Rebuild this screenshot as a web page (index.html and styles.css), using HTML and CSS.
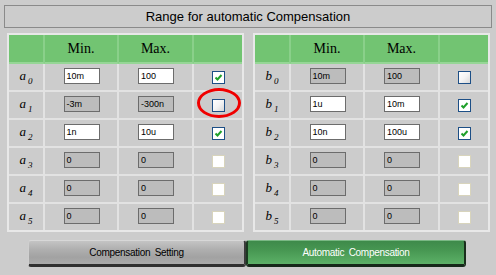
FILE: index.html
```html
<!DOCTYPE html>
<html>
<head>
<meta charset="utf-8">
<link rel="stylesheet" href="styles.css">
</head>
<body>
<div class="page">
  <div class="title">Range for automatic Compensation</div>
  <div class="tables">
    <div class="panel">
      <table class="grid">
        <tr class="head"><th class="c-lab"></th><th class="c-min">Min.</th><th class="c-max">Max.</th><th class="c-chk"></th></tr>
        <tr><td class="lab">a<sub>0</sub></td><td><span class="inp">10m</span></td><td><span class="inp">100</span></td><td><span class="cb on"><svg viewBox="0 0 11 11"><path d="M2.5 5.5 L4.5 7.5 L8.5 3" /></svg></span></td></tr>
        <tr><td class="lab">a<sub>1</sub></td><td><span class="inp dis">-3m</span></td><td><span class="inp dis">-300n</span></td><td><span class="cb off"></span></td></tr>
        <tr><td class="lab">a<sub>2</sub></td><td><span class="inp">1n</span></td><td><span class="inp">10u</span></td><td><span class="cb on"><svg viewBox="0 0 11 11"><path d="M2.5 5.5 L4.5 7.5 L8.5 3" /></svg></span></td></tr>
        <tr><td class="lab">a<sub>3</sub></td><td><span class="inp dis">0</span></td><td><span class="inp dis">0</span></td><td><span class="cb na"></span></td></tr>
        <tr><td class="lab">a<sub>4</sub></td><td><span class="inp dis">0</span></td><td><span class="inp dis">0</span></td><td><span class="cb na"></span></td></tr>
        <tr class="last"><td class="lab">a<sub>5</sub></td><td><span class="inp dis">0</span></td><td><span class="inp dis">0</span></td><td><span class="cb na"></span></td></tr>
      </table>
      <div class="ring"></div>
    </div>
    <div class="panel">
      <table class="grid">
        <tr class="head"><th class="c-lab"></th><th class="c-min">Min.</th><th class="c-max">Max.</th><th class="c-chk"></th></tr>
        <tr><td class="lab">b<sub>0</sub></td><td><span class="inp dis">10m</span></td><td><span class="inp dis">100</span></td><td><span class="cb off"></span></td></tr>
        <tr><td class="lab">b<sub>1</sub></td><td><span class="inp">1u</span></td><td><span class="inp">10m</span></td><td><span class="cb on"><svg viewBox="0 0 11 11"><path d="M2.5 5.5 L4.5 7.5 L8.5 3" /></svg></span></td></tr>
        <tr><td class="lab">b<sub>2</sub></td><td><span class="inp">10n</span></td><td><span class="inp">100u</span></td><td><span class="cb on"><svg viewBox="0 0 11 11"><path d="M2.5 5.5 L4.5 7.5 L8.5 3" /></svg></span></td></tr>
        <tr><td class="lab">b<sub>3</sub></td><td><span class="inp dis">0</span></td><td><span class="inp dis">0</span></td><td><span class="cb na"></span></td></tr>
        <tr><td class="lab">b<sub>4</sub></td><td><span class="inp dis">0</span></td><td><span class="inp dis">0</span></td><td><span class="cb na"></span></td></tr>
        <tr class="last"><td class="lab">b<sub>5</sub></td><td><span class="inp dis">0</span></td><td><span class="inp dis">0</span></td><td><span class="cb na"></span></td></tr>
      </table>
    </div>
  </div>
  <div class="buttons">
    <div class="btn gray">Compensation Setting</div>
    <div class="btn green">Automatic Compensation</div>
  </div>
</div>
</body>
</html>
```
FILE: styles.css
```css
* { box-sizing: border-box; }
html, body { margin: 0; padding: 0; }
body {
  width: 496px;
  height: 275px;
  background: #cccccc;
  font-family: "Liberation Sans", Arial, sans-serif;
  overflow: hidden;
}
.page { padding-top: 5px; }
.title {
  margin: 0 4px 0 4px;
  height: 23px;
  border: 1px solid #8a8a8a;
  display: flex;
  align-items: center;
  justify-content: center;
  font-size: 13px;
  color: #000;
  padding-bottom: 1px;
}
.tables {
  display: flex;
  gap: 9px;
  padding-left: 7px;
  margin-top: 5px;
}
.panel { position: relative; }
.grid {
  border-collapse: separate;
  border-spacing: 0;
  border: 2px solid #e8e8e8;
  width: 237px;
  table-layout: fixed;
}
.grid th, .grid td {
  padding: 0;
  border-right: 2px solid #e2e2e2;
  border-bottom: 2px solid #e2e2e2;
  text-align: center;
  vertical-align: middle;
}
.grid th:last-child, .grid td:last-child { border-right: none; }
.grid tr.last td { border-bottom: none; height: 26px; }
.grid td { height: 28px; }
.head th {
  background: #72c472;
  height: 29px;
  border-right-color: #8ad08a;
  border-bottom-color: #96d696;
  font-family: "Liberation Serif", "Times New Roman", serif;
  font-weight: normal;
  font-size: 14px;
  color: #000;
  padding-top: 1px;
}
.c-lab { width: 36px; }
.c-min { width: 74px; }
.c-max { width: 75px; }
.c-chk { width: 48px; }
.lab {
  font-family: "Liberation Serif", "Times New Roman", serif;
  font-style: italic;
  font-size: 13px;
  color: #000;
}
.lab sub {
  font-size: 9px;
  vertical-align: -4px;
  margin-left: 2px;
}
.inp {
  display: inline-block;
  width: 36px;
  height: 16px;
  border: 1px solid #6c6c6c;
  background: #ffffff;
  font-size: 9px;
  line-height: 14px;
  text-align: left;
  padding-left: 2px;
  color: #000;
  vertical-align: middle;
  margin-bottom: 2px;
  margin-left: 1px;
  white-space: nowrap;
  overflow: hidden;
}
.inp.dis { background: #bcbcbc; }
.cb {
  display: inline-block;
  width: 13px;
  height: 13px;
  vertical-align: middle;
  margin-bottom: 1px;
}
.cb.on, .cb.off {
  border: 1px solid #1d4f86;
  background: linear-gradient(135deg, #ffffff 0%, #f4f4f4 50%, #d8d8d8 100%);
}
.cb.on { background: #ffffff; }
.cb svg { display: block; width: 11px; height: 11px; }
.cb svg path { fill: none; stroke: #1fa02a; stroke-width: 2; }
.cb.na { border: 1px solid #d8d4bc; background: #ffffff; }
.ring {
  position: absolute;
  left: 190px;
  top: 55px;
  width: 44px;
  height: 30px;
  border: 3px solid #f00000;
  border-radius: 50%;
}
.buttons {
  display: flex;
  padding-left: 28px;
  margin-top: 8px;
}
.btn {
  height: 27px;
  display: flex;
  align-items: center;
  justify-content: center;
  font-size: 10px;
  letter-spacing: -0.3px;
  word-spacing: 2px;
  border-radius: 3px;
  padding-top: 0px;
}
.btn.gray {
  width: 218px;
  background: linear-gradient(#c4c4c4 0%, #b0b0b0 35%, #a2a2a2 70%, #aaaaaa 100%);
  border-top: 1px solid #d8d8d8;
  border-left: 1px solid #cfcfcf;
  border-right: 2px solid #3a3a3a;
  border-bottom: 3px solid #303030;
  color: #000;
}
.btn.green {
  width: 220px;
  background: linear-gradient(#3e8a4a 0%, #479752 40%, #55a860 80%, #5db168 100%);
  border-top: 1px solid #7ab884;
  border-left: 2px solid #1a3a20;
  border-right: 2px solid #1a2e1c;
  border-bottom: 3px solid #16281a;
  color: #ffffff;
}
```
